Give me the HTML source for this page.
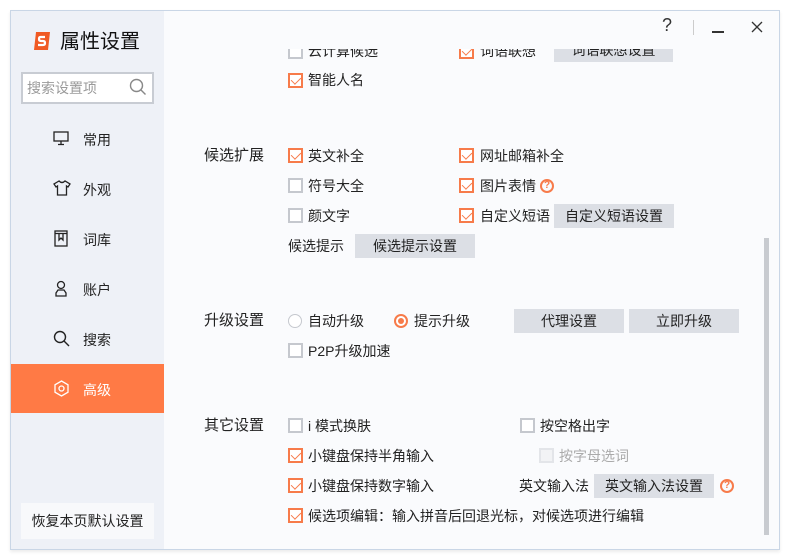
<!DOCTYPE html>
<html><head><meta charset="utf-8"><style>
*{margin:0;padding:0;box-sizing:border-box}
body{width:790px;height:560px;background:#fff;position:relative;overflow:hidden;font-family:"Liberation Sans","Noto Sans CJK SC",sans-serif;color:#222;font-size:14px;line-height:20px}
.win{position:absolute;left:10px;top:10px;width:770px;height:540px;border:1px solid #c9d6e6;background:#fafbfd;box-shadow:0 2px 3px rgba(0,0,0,.08)}
.side{position:absolute;left:11px;top:11px;width:153px;height:538px;background:#eef1f7}
.a{position:absolute;white-space:nowrap}
.cb{position:absolute;width:15px;height:15px;border:2px solid #c5c8ce;background:#fff}
.cb.on{border-color:#f77b4a}
.cb.on::after{content:"";position:absolute;left:3px;top:0px;width:5px;height:8px;border:solid #f77b4a;border-width:0 1.6px 1.6px 0;transform:rotate(45deg)}
.cb.dis{border-color:#e3e5e9;background:#f2f3f5}
.btn{position:absolute;background:#dcdfe5;height:24px;line-height:24px;text-align:center;font-size:14px;color:#222}
.lbl{font-size:15px}
.nav{position:absolute;left:11px;width:153px;height:50px}
.nav span{position:absolute;left:72px;top:16px;font-size:14px}
.nav svg{position:absolute;left:42px;top:16px}
.help{position:absolute;width:14px;height:14px;border:2px solid #f77b4a;border-radius:50%;color:#f77b4a;font-size:10px;font-weight:bold;line-height:10px;text-align:center}
</style></head><body>
<div class="win"></div>
<div class="side"></div>
<svg class="a" style="left:32px;top:31px" width="20" height="20" viewBox="0 0 20 20"><path d="M4 1h14l-2 18H2z" fill="#f05a24"/><path d="M13 6H8.5Q7 6 7 8t2 2h2q2 0 2 2t-2 2H6" stroke="#fff" stroke-width="2.2" fill="none"/></svg>
<div class="a" style="left:60px;top:29px;font-size:20px;line-height:26px;color:#111">属性设置</div>
<div class="a" style="left:21px;top:72px;width:133px;height:32px;border:2px solid #c8ccd3;background:#fff"></div>
<div class="a" style="left:27px;top:78px;color:#9a9a9a;font-size:14px">搜索设置项</div>
<svg class="a" style="left:129px;top:78px" width="18" height="18" viewBox="0 0 18 18"><circle cx="7.5" cy="7.5" r="6" stroke="#888" stroke-width="1.4" fill="none"/><path d="M12 12l4.5 4.5" stroke="#888" stroke-width="1.4"/></svg>
<div class="nav" style="top:114px"><svg width="16" height="16" viewBox="0 0 16 16" fill="none" stroke="#222" stroke-width="1.3"><rect x="1" y="2" width="14" height="9"/><path d="M8 11v3M5 14.5h6"/></svg><span>常用</span></div>
<div class="nav" style="top:164px"><svg width="18" height="16" viewBox="0 0 18 16" fill="none" stroke="#222" stroke-width="1.3"><path d="M6 1L1 4l2 3 1.5-1V15h9V6l1.5 1 2-3-5-3Q9 4 6 1z"/></svg><span>外观</span></div>
<div class="nav" style="top:214px"><svg width="16" height="17" viewBox="0 0 16 17" fill="none" stroke="#222" stroke-width="1.3"><rect x="2" y="1" width="12" height="15"/><path d="M2 3.5h12M6 4v6l2-2 2 2V4"/></svg><span>词库</span></div>
<div class="nav" style="top:264px"><svg width="16" height="17" viewBox="0 0 16 17" fill="none" stroke="#222" stroke-width="1.3"><circle cx="8" cy="5" r="3.5"/><path d="M3 16v-3l2-3h6l2 3v3z"/></svg><span>账户</span></div>
<div class="nav" style="top:314px"><svg width="17" height="17" viewBox="0 0 17 17" fill="none" stroke="#222" stroke-width="1.4"><circle cx="7" cy="7" r="5.5"/><path d="M11 11l5 5"/></svg><span>搜索</span></div>
<div class="nav" style="top:364px;background:#ff7a45;height:49px"><svg width="17" height="17" viewBox="0 0 17 17" fill="none" stroke="#fff" stroke-width="1.3"><path d="M8.5 1l6.5 3.75v7.5L8.5 16 2 12.25v-7.5z"/><circle cx="8.5" cy="8.5" r="2.5"/></svg><span style="color:#fff">高级</span></div>
<div class="a" style="left:21px;top:503px;width:133px;height:36px;background:#f8f9fb;text-align:center;line-height:36px;font-size:14px">恢复本页默认设置</div>

<div class="cb" style="left:288px;top:44px"></div><div class="a" style="left:308px;top:41px">云计算候选</div>
<div class="cb on" style="left:459px;top:44px"></div><div class="a" style="left:480px;top:41px">词语联想</div>
<div class="btn" style="left:554px;top:38px;width:119px">词语联想设置</div>
<div class="a" style="left:165px;top:11px;width:600px;height:38px;background:#fafbfd"></div>
<div class="a" style="left:662px;top:15px;font-size:18px;color:#333">?</div>
<div class="a" style="left:693px;top:20px;width:1px;height:15px;background:#ccc"></div>
<div class="a" style="left:712px;top:31px;width:12px;height:1.5px;background:#333"></div>
<svg class="a" style="left:751px;top:21px" width="12" height="12" viewBox="0 0 12 12"><path d="M1 1l10 10M11 1L1 11" stroke="#333" stroke-width="1.3"/></svg>

<div class="cb on" style="left:288px;top:73px"></div><div class="a" style="left:308px;top:70px">智能人名</div>

<div class="a lbl" style="left:204px;top:146px">候选扩展</div>
<div class="cb on" style="left:288px;top:148px"></div><div class="a" style="left:308px;top:146px">英文补全</div>
<div class="cb on" style="left:459px;top:148px"></div><div class="a" style="left:480px;top:146px">网址邮箱补全</div>
<div class="cb" style="left:288px;top:178px"></div><div class="a" style="left:308px;top:176px">符号大全</div>
<div class="cb on" style="left:459px;top:178px"></div><div class="a" style="left:480px;top:176px">图片表情</div>
<div class="help" style="left:540px;top:179px">?</div>
<div class="cb" style="left:288px;top:208px"></div><div class="a" style="left:308px;top:206px">颜文字</div>
<div class="cb on" style="left:459px;top:208px"></div><div class="a" style="left:480px;top:206px">自定义短语</div>
<div class="btn" style="left:554px;top:204px;width:120px">自定义短语设置</div>
<div class="a" style="left:288px;top:236px">候选提示</div>
<div class="btn" style="left:355px;top:234px;width:120px">候选提示设置</div>

<div class="a lbl" style="left:204px;top:311px">升级设置</div>
<div class="a" style="left:288px;top:314px;width:14px;height:14px;border:1.5px solid #c5c8ce;border-radius:50%;background:#fff"></div><div class="a" style="left:308px;top:311px">自动升级</div>
<div class="a" style="left:394px;top:314px;width:14px;height:14px;border:2px solid #f77b4a;border-radius:50%;background:#fff"><div style="position:absolute;left:2px;top:2px;width:6px;height:6px;border-radius:50%;background:#f77b4a"></div></div><div class="a" style="left:414px;top:311px">提示升级</div>
<div class="btn" style="left:514px;top:309px;width:110px">代理设置</div>
<div class="btn" style="left:629px;top:309px;width:110px">立即升级</div>
<div class="cb" style="left:288px;top:343px"></div><div class="a" style="left:308px;top:341px">P2P升级加速</div>

<div class="a lbl" style="left:204px;top:416px">其它设置</div>
<div class="cb" style="left:288px;top:418px"></div><div class="a" style="left:308px;top:416px">i 模式换肤</div>
<div class="cb" style="left:520px;top:418px"></div><div class="a" style="left:540px;top:416px">按空格出字</div>
<div class="cb on" style="left:288px;top:448px"></div><div class="a" style="left:308px;top:446px">小键盘保持半角输入</div>
<div class="cb dis" style="left:539px;top:448px"></div><div class="a" style="left:559px;top:446px;color:#aaa">按字母选词</div>
<div class="cb on" style="left:288px;top:478px"></div><div class="a" style="left:308px;top:476px">小键盘保持数字输入</div>
<div class="a" style="left:519px;top:476px">英文输入法</div>
<div class="btn" style="left:594px;top:474px;width:120px">英文输入法设置</div>
<div class="help" style="left:720px;top:479px">?</div>
<div class="cb on" style="left:288px;top:508px"></div><div class="a" style="left:308px;top:506px">候选项编辑：输入拼音后回退光标，对候选项进行编辑</div>

<div class="a" style="left:764px;top:238px;width:5px;height:297px;background:#c8cbd0"></div>
</body></html>
